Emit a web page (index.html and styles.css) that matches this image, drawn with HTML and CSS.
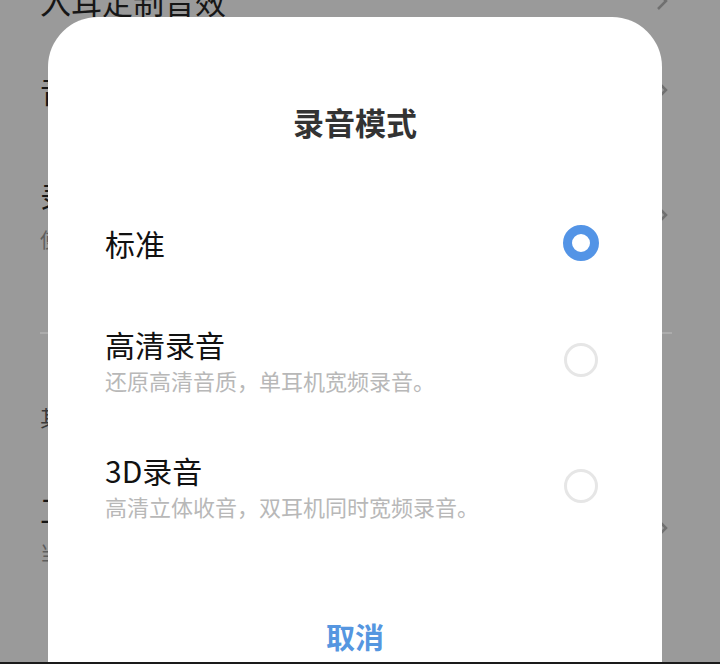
FILE: index.html
```html
<!DOCTYPE html>
<html lang="zh-CN">
<head>
<meta charset="utf-8">
<link rel="stylesheet" href="styles.css">
</head>
<body>
<div class="screen">
  <div class="page">
    <div class="row row-a">
      <div class="row-text"><div class="row-title">入耳定制音效</div></div>
      <svg class="chev" viewBox="0 0 12 20"><polyline points="2,2 10,10 2,18"/></svg>
    </div>
    <div class="row row-b">
      <div class="row-text"><div class="row-title">音效模式</div></div>
      <svg class="chev" viewBox="0 0 12 20"><polyline points="2,2 10,10 2,18"/></svg>
    </div>
    <div class="row row-c">
      <div class="row-text"><div class="row-title">录音模式</div><div class="row-sub">使用耳机录音时的模式</div></div>
      <svg class="chev" viewBox="0 0 12 20"><polyline points="2,2 10,10 2,18"/></svg>
    </div>
    <div class="divider"></div>
    <div class="section">其他设置</div>
    <div class="row row-d">
      <div class="row-text"><div class="row-title">工作模式</div><div class="row-sub">当前为默认模式</div></div>
      <svg class="chev" viewBox="0 0 12 20"><polyline points="2,2 10,10 2,18"/></svg>
    </div>
    <div class="row row-e">
      <div class="row-text"><div class="row-title">工具</div></div>
    </div>
  </div>

  <div class="dialog">
    <div class="dialog-title">录音模式</div>
    <div class="options">
      <div class="option option-single">
        <div class="opt-text"><div class="opt-title">标准</div></div>
        <span class="radio radio-on"></span>
      </div>
      <div class="option">
        <div class="opt-text"><div class="opt-title">高清录音</div><div class="opt-sub">还原高清音质，单耳机宽频录音。</div></div>
        <span class="radio"></span>
      </div>
      <div class="option">
        <div class="opt-text"><div class="opt-title">3D录音</div><div class="opt-sub">高清立体收音，双耳机同时宽频录音。</div></div>
        <span class="radio"></span>
      </div>
    </div>
    <div class="cancel">取消</div>
  </div>
</div>
</body>
</html>
```
FILE: styles.css
```css
* { box-sizing: border-box; }
html, body { margin: 0; padding: 0; }
body {
  font-family: "Noto Sans CJK SC", "Noto Sans", sans-serif;
  background: #1a1a1a;
}
.screen {
  position: relative;
  width: 720px;
  height: 664px;
  overflow: hidden;
  background: #9a9a9a;
  border-bottom: 2px solid #1a1a1a;
}
.page {
  margin-top: -40px;
}
.row {
  display: flex;
  align-items: center;
  justify-content: space-between;
  padding: 0 52px 0 40px;
}
.row-a { height: 82px; }
.row-b { height: 96px; }
.row-c { height: 154px; }
.row-d { height: 188px; }
.row-e { height: 100px; }
.row-title {
  font-size: 31px;
  line-height: 40px;
  color: #161616;
}
.row-sub {
  margin-top: 10px;
  font-size: 20px;
  line-height: 28px;
  color: #5e5e5e;
}
.chev {
  width: 12px;
  height: 20px;
  fill: none;
  stroke: #707070;
  stroke-width: 2.5;
}
.divider {
  margin: 40px 48px 0 40px;
  height: 2px;
  background: #acacac;
}
.section {
  padding: 64px 40px 0;
  font-size: 22px;
  line-height: 36px;
  color: #3a3a3a;
}
.dialog {
  position: absolute;
  left: 48px;
  top: 17px;
  width: 614px;
  bottom: 0;
  background: #ffffff;
  border-radius: 50px 50px 0 0;
  display: flex;
  flex-direction: column;
  padding-top: 84px;
}
.dialog-title {
  text-align: center;
  font-size: 31px;
  line-height: 42px;
  font-weight: 700;
  color: #333333;
}
.options {
  margin-top: 50px;
  display: flex;
  flex-direction: column;
}
.option {
  display: flex;
  align-items: center;
  justify-content: space-between;
  padding: 27px 64px 27px 57px;
}
.option-single {
  padding-top: 30px;
  padding-bottom: 34px;
}
.opt-title {
  font-size: 30px;
  line-height: 40px;
  color: #111111;
}
.opt-sub {
  font-size: 22px;
  line-height: 32px;
  color: #b8b8b8;
}
.radio {
  flex: none;
  width: 34px;
  height: 34px;
  border-radius: 50%;
  border: 3px solid #e6e6e6;
}
.radio-on {
  width: 36px;
  height: 36px;
  border: 9px solid #5394e6;
  margin-right: -1px;
}
.cancel {
  margin-top: 67px;
  text-align: center;
  font-size: 29px;
  line-height: 40px;
  font-weight: 700;
  color: #5596e0;
}
```
